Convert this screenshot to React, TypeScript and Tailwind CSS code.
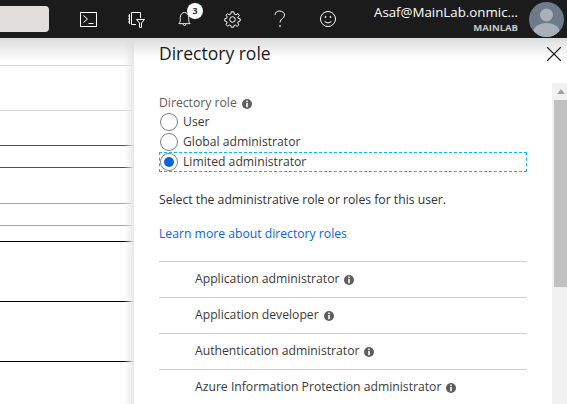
import { X } from 'lucide-react';

const leftRows = [
  'h-[28px] border-[#d8d8d8]',
  'h-[45px] border-[#d8d8d8]',
  'h-[35px] border-[#7a2f9e]',
  'h-[22px] border-[#7a2f9e]',
  'h-[36px] border-[#a6a6a6]',
  'h-[22px] border-[#a6a6a6]',
  'h-[16px] border-black',
  'h-[60px] border-black',
  'h-[60px] border-black',
];

const roles = [
  'Application administrator',
  'Application developer',
  'Authentication administrator',
  'Azure Information Protection administrator',
];

function InfoIcon() {
  return (
    <svg width="10" height="10" viewBox="0 0 10 10" className="shrink-0">
      <circle cx="5" cy="5" r="5" fill="#605e5c" />
      <rect x="4.2" y="1.6" width="1.6" height="1.5" fill="#fff" />
      <rect x="4.2" y="4" width="1.6" height="4.2" fill="#fff" />
    </svg>
  );
}

function Radio({ label, checked }: { label: string; checked?: boolean }) {
  return (
    <div
      className={`flex h-[20px] items-center gap-[5px] border border-dashed ${checked ? 'border-[#00bcf2]' : 'border-transparent'}`}
    >
      <span className="flex h-[18px] w-[18px] shrink-0 items-center justify-center rounded-full border border-[#7f7f7f] bg-white">
        {checked && <span className="h-[10px] w-[10px] rounded-full bg-[#0b63dc]" />}
      </span>
      <span className="mt-[1px] text-[12.2px] text-[#3b3a39]">{label}</span>
    </div>
  );
}

function HeaderIcons() {
  const stroke = { fill: 'none', stroke: '#fff', strokeWidth: 1 };
  return (
    <div className="ml-[15px] flex">
      <div className="flex h-[38px] w-[48px] items-center justify-center">
        <svg width="17" height="15" viewBox="0 0 17 15" {...stroke}>
          <rect x="0.5" y="0.5" width="16" height="14" />
          <path d="M3.5 3.5 L7.5 7 L3.5 10.5 M8.5 11.5 H13.5" />
        </svg>
      </div>
      <div className="flex h-[38px] w-[48px] items-center justify-center">
        <svg width="17" height="17" viewBox="0 0 17 17" {...stroke}>
          <path d="M1.5 3 V13 M3.5 1.5 H12.5 V7 M3.5 1.5 V13.5 H8" />
          <path d="M0 5 H2 M0 8 H2 M0 11 H2" />
          <path d="M8.5 8.5 H16.5 L13.5 12 V16.5 H11.5 V12 Z" />
        </svg>
      </div>
      <div className="relative flex h-[38px] w-[48px] items-center justify-center">
        <svg width="13" height="16" viewBox="0 0 14 17" {...stroke}>
          <path d="M1 13.5 C2.5 12 2.5 10 2.5 7 C2.5 3.5 4.5 1.5 7 1.5 C9.5 1.5 11.5 3.5 11.5 7 C11.5 10 11.5 12 13 13.5 Z" />
          <path d="M5.5 14 C5.5 16 8.5 16 8.5 14" />
        </svg>
        <span className="absolute left-[27px] top-[3px] flex h-[16px] w-[16px] items-center justify-center rounded-full bg-white text-[9px] font-bold text-[#323130]">
          3
        </span>
      </div>
      <div className="flex h-[38px] w-[48px] items-center justify-center">
        <svg width="17" height="17" viewBox="0 0 17 17" {...stroke}>
          <circle cx="8.5" cy="8.5" r="2.8" />
          <path d="M7.2 0.8 H9.8 L10.3 3 L12 3.8 L14 2.6 L15.4 4.5 L13.8 6 L14.2 7.3 L16.2 7.8 V10 L14.2 10.6 L13.7 12 L14.9 13.8 L13.1 15.4 L11.3 14 L10 14.5 L9.6 16.2 H7.3 L6.9 14.5 L5.4 14 L3.7 15.2 L1.9 13.6 L3.1 12 L2.6 10.6 L0.8 10 V7.7 L2.7 7.2 L3.2 5.9 L1.9 4.3 L3.6 2.7 L5.2 3.8 L6.8 3 Z" />
        </svg>
      </div>
      <div className="flex h-[38px] w-[48px] items-center justify-center">
        <svg width="12" height="18" viewBox="0 0 12 18" {...stroke}>
          <path d="M1 5 C1 2.5 3 1 5.5 1 C8.5 1 10.5 3 10.5 5.2 C10.5 8.5 6 8.5 6 12.5" />
          <circle cx="6" cy="16" r="0.5" />
        </svg>
      </div>
      <div className="flex h-[38px] w-[48px] items-center justify-center">
        <svg width="16" height="16" viewBox="0 0 16 16" {...stroke}>
          <circle cx="8" cy="8" r="7.5" />
          <circle cx="5.5" cy="6" r="0.6" />
          <circle cx="10.5" cy="6" r="0.6" />
          <path d="M4.5 10 C6 12.5 10 12.5 11.5 10" />
        </svg>
      </div>
    </div>
  );
}

function Avatar() {
  return (
    <svg width="35" height="35" viewBox="0 0 35 35" className="shrink-0">
      <defs>
        <clipPath id="avatar-clip">
          <circle cx="17.5" cy="17.5" r="17.5" />
        </clipPath>
      </defs>
      <g clipPath="url(#avatar-clip)">
        <rect width="35" height="35" fill="#6c7a89" />
        <circle cx="17.5" cy="13" r="6.5" fill="#a9b0b7" />
        <ellipse cx="17.5" cy="29.5" rx="13" ry="8.5" fill="#a9b0b7" />
      </g>
    </svg>
  );
}

export default function App() {
  return (
    <div className="relative h-[404px] w-[567px] overflow-hidden bg-white font-['Open_Sans',sans-serif]">
      <header className="relative z-10 flex h-[38px] items-center bg-[#1b1b1b]">
        <div className="h-[26px] w-[49px] rounded-r-sm bg-[#e0dfdd]" />
        <HeaderIcons />
        <div className="flex w-[166px] flex-col items-end pt-[1px] leading-none text-white">
          <span className="text-[13.3px] whitespace-nowrap">Asaf@MainLab.onmic...</span>
          <span className="mt-[4px] text-[9.5px] font-bold text-[#c8c8c8]">MAINLAB</span>
        </div>
        <div className="ml-[11px]">
          <Avatar />
        </div>
      </header>

      <div className="flex h-[366px]">
        <div className="relative w-[134px] shrink-0">
          {leftRows.map((row, i) => (
            <div key={i} className={`border-b ${row}`} />
          ))}
          <div className="absolute inset-y-0 right-0 w-[10px] bg-gradient-to-r from-transparent to-[#e8e8e8]" />
          <div className="absolute inset-x-0 top-0 h-[24px] bg-gradient-to-b from-[#dcdcdc] to-transparent" />
        </div>

        <div className="relative flex min-w-0 flex-1 bg-white">
          <div className="absolute inset-x-0 top-0 h-[20px] bg-gradient-to-b from-[#dcdcdc] to-transparent" />
          <div className="relative w-[418px] shrink-0 pl-[25px] pr-[25px]">
            <h1 className="mt-[5px] text-[17.5px] leading-[20px] text-[#1b1b1b]">Directory role</h1>

            <div className="mt-[32px] flex h-[17px] items-center gap-[5px] text-[12.2px] text-[#605e5c]">
              Directory role <InfoIcon />
            </div>
            <div className="flex flex-col">
              <Radio label="User" />
              <Radio label="Global administrator" />
              <Radio label="Limited administrator" checked />
            </div>

            <p className="mt-[20px] text-[12.2px] leading-[16px] text-[#323130]">
              Select the administrative role or roles for this user.
            </p>
            <a className="mt-[18px] block text-[12.2px] leading-[16px] text-[#0b63dc]">
              Learn more about directory roles
            </a>

            <div className="mt-[19px]">
              {roles.map(role => (
                <div
                  key={role}
                  className="flex h-[36px] items-center gap-[5px] border-t border-[#cfcfcf] pl-[36px] text-[12.2px] text-[#3b3a39]"
                >
                  {role} <InfoIcon />
                </div>
              ))}
            </div>
          </div>

          <div className="mt-[45px] flex w-[15px] flex-col bg-[#f1f1f1] pl-[2px]">
            <div className="flex h-[17px] items-center justify-center">
              <svg width="8" height="5" viewBox="0 0 8 5">
                <path d="M4 0 L8 5 H0 Z" fill="#a3a3a3" />
              </svg>
            </div>
            <div className="h-[187px] bg-[#c1c1c1]" />
          </div>

          <X size={26} strokeWidth={1} className="absolute left-[407px] top-[3px] text-[#1b1b1b]" />
        </div>
      </div>
    </div>
  );
}
